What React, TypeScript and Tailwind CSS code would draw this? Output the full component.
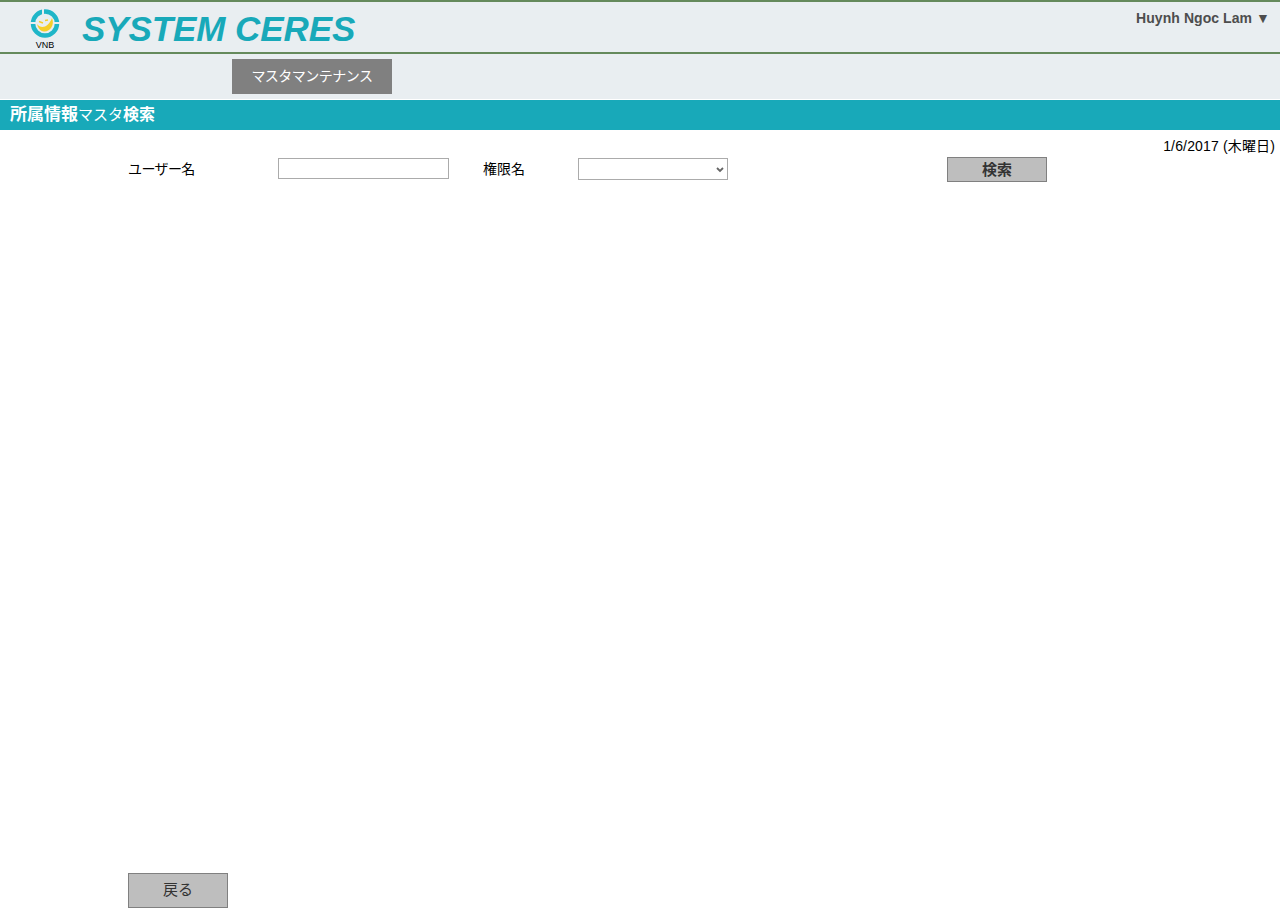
import React from 'react';

const font = "font-['Liberation_Sans','Noto_Sans_CJK_JP',sans-serif]";

const Logo = () => (
    <div className="w-[30px] flex flex-col items-center">
        <svg width="30" height="30" viewBox="0 0 30 30" className="block">
            <circle cx="15" cy="14.5" r="12" fill="none" stroke="#1fb6c8" strokeWidth="4.5" />
            <rect x="12" y="0" width="2" height="6" fill="#e9eef1" />
            <rect x="0" y="13" width="6" height="2" fill="#e9eef1" />
            <rect x="24" y="13" width="6" height="2" fill="#e9eef1" />
            <path d="M7 15 C11 20 18 19 22 9 C25 16 20 23 14 22.5 C10 22 8 19 7 15 Z" fill="#f5cf2a" />
            <path d="M9 12.5 L13 14 M15 11.5 L18 11" stroke="#f5cf2a" strokeWidth="1.4" />
        </svg>
        <span className="text-[9px] leading-[9px] mt-[2px] text-black">VNB</span>
    </div>
);

export default function App() {
    return (
        <div className={`${font} w-[1280px] h-[913px] bg-white flex flex-col overflow-hidden`}>
            <header className="h-[54px] bg-[#e9eef1] border-t-2 border-b-2 border-[#658a5c] flex justify-between">
                <div className="flex items-start pl-[30px]">
                    <div className="pt-[7px]"><Logo /></div>
                    <h1 className="ml-[22px] mt-[6px] text-[35px] leading-[41px] font-bold italic text-[#18a9b9] tracking-[-0.08px]">SYSTEM CERES</h1>
                </div>
                <div className="pt-[8px] pr-[10px] text-[14px] leading-[16px] font-bold text-[#4d4d4d] tracking-[0.07px]">Huynh Ngoc Lam ▼</div>
            </header>

            <nav className="h-[45px] bg-[#e9eef1] pl-[232px] pt-[5px]">
                <button className="w-[160px] h-[35px] bg-[#808080] text-white text-[14px] tracking-[-0.5px]">マスタマンテナンス</button>
            </nav>

            <div className="mt-[1px] h-[30px] bg-[#18a9b9] pl-[10px] flex items-center text-white font-bold text-[16px]">
                <span className="text-[17px]">所属情報</span><span className="font-normal text-[15px]">マスタ</span>検索
            </div>

            <div className="pr-[5px] pt-[8px] text-right text-[14px] leading-[16px] text-black tracking-[0.15px]">1/6/2017 (木曜日)</div>

            <form className="flex items-start pl-[128px] mt-[3px] h-[25px] text-[14px] text-black">
                <label className="w-[150px] mt-[2px] tracking-[-0.6px]">ユーザー名</label>
                <input type="text" className="mt-[1px] w-[171px] h-[21px] border border-[#ababab] bg-white" />
                <label className="ml-[34px] w-[95px] mt-[2px]">権限名</label>
                <div className="relative mt-[1px] w-[150px] h-[22px]">
                    <select className="w-full h-full border border-[#ababab] bg-white text-[14px] appearance-none">
                        <option></option>
                    </select>
                    <svg width="8" height="6" viewBox="0 0 8 6" className="absolute right-[4px] top-[9px]">
                        <path d="M1 1 L4 4 L7 1" fill="none" stroke="#666666" strokeWidth="1.8" />
                    </svg>
                </div>
                <button type="button" className="ml-[219px] w-[100px] h-[25px] pt-[1px] bg-[#bebebe] border border-[#808080] text-[#333333] font-bold text-[15px]">検索</button>
            </form>

            <div className="flex-1" />

            <div className="pl-[128px] pb-[5px]">
                <button className="w-[100px] h-[35px] bg-[#bebebe] border border-[#808080] text-[#333333] text-[15px] block">戻る</button>
            </div>
        </div>
    );
}
